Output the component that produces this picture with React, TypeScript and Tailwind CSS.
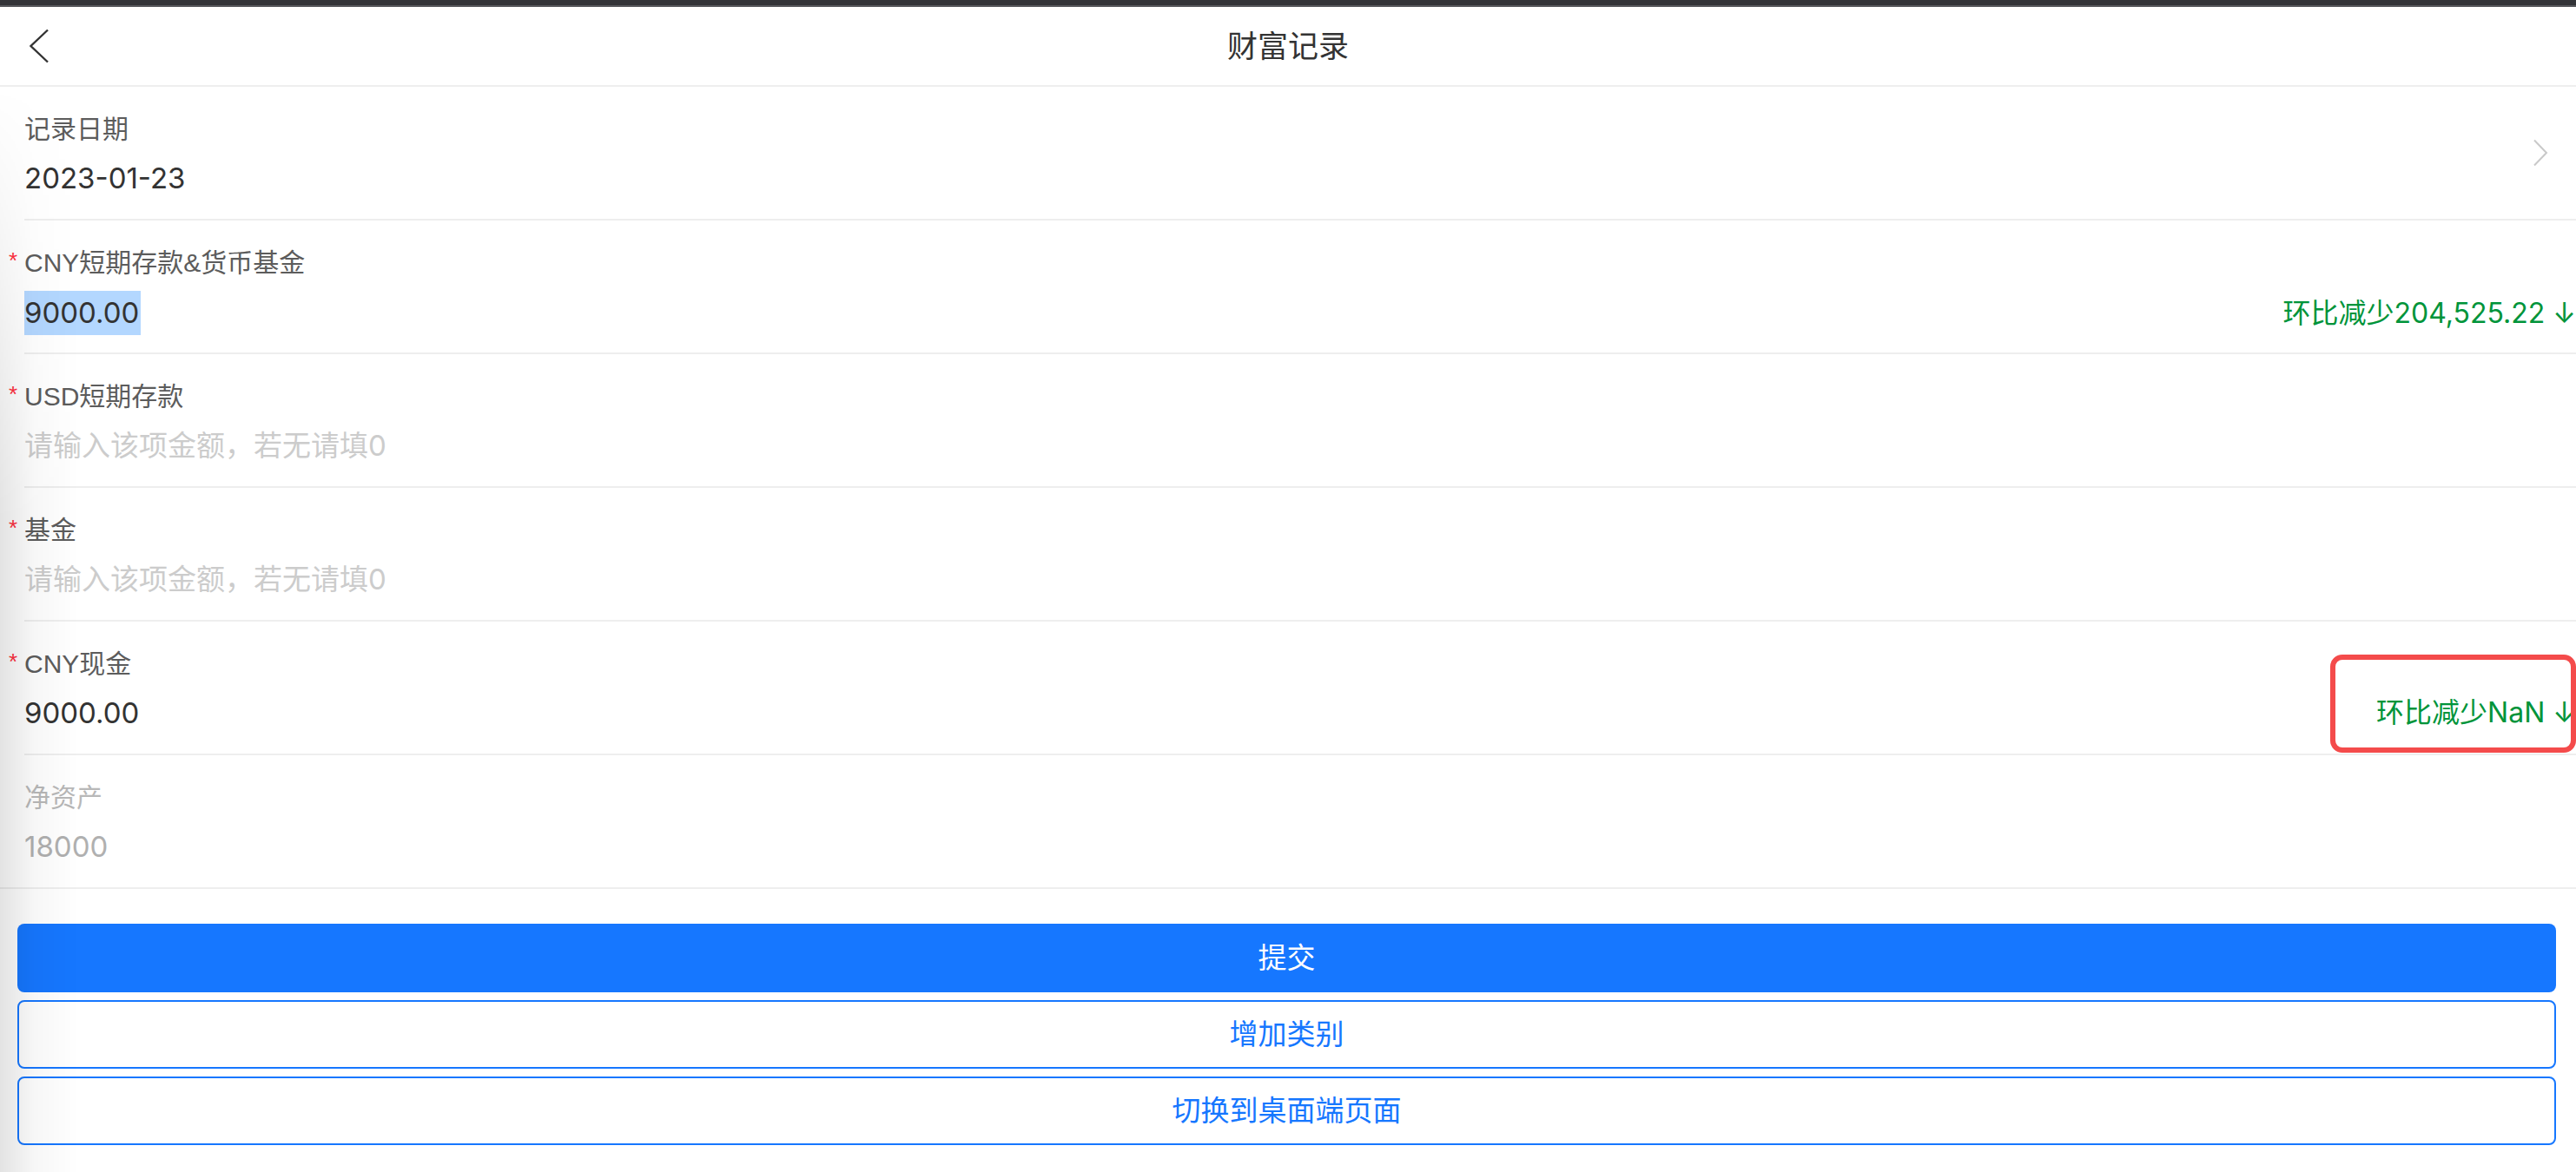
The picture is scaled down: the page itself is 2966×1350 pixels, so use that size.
import React from "react";

type FieldProps = {
  label: string;
  required?: boolean;
  last?: boolean;
  muted?: boolean;
  arrow?: boolean;
  marked?: boolean;
  extra?: string;
  children: React.ReactNode;
};

function Field({ label, required, last, muted, arrow, marked, extra, children }: FieldProps) {
  return (
    <div className="relative pl-[28px]">
      <div
        className={
          last
            ? "flex h-[152px]"
            : "flex h-[154px] border-b-2 border-[#eeeeee]"
        }
      >
        <div className="flex flex-1 flex-col pt-[28px]">
          <div
            className={
              muted
                ? "flex items-start text-[30px] leading-[42px] text-[#b8b8b8]"
                : "flex items-start text-[30px] leading-[42px] text-[#5c5c5c]"
            }
          >
            {required && (
              <span className="-ml-[18px] mt-[5px] w-[18px] text-[26px] leading-[26px] text-[#ff3141]">*</span>
            )}
            <span>{label}</span>
          </div>
          <div className="mt-[11px] flex items-center justify-between [font-family:Inter,'Noto_Sans_CJK_SC',sans-serif]">
            <div className="text-[33px] leading-[48px]">{children}</div>
            {extra && (
              <span className="whitespace-nowrap text-[32px] leading-[48px] text-[#00943a]">{extra}</span>
            )}
          </div>
        </div>
        {arrow && (
          <div className="mr-[32px] self-center">
            <svg width="18" height="32" viewBox="0 0 18 32" fill="none">
              <path d="M2 1.5 L16 16 L2 30.5" stroke="#c9c9c9" strokeWidth="2" />
            </svg>
          </div>
        )}
      </div>
      {marked && (
        <div className="pointer-events-none absolute right-0 top-[38px] h-[113px] w-[283px] rounded-[14px] border-[6px] border-[#f44b4b]" />
      )}
    </div>
  );
}

export default function App() {
  return (
    <div className="relative min-h-screen overflow-hidden bg-white text-[#333333] [font-family:'Liberation_Sans','Noto_Sans_CJK_SC',sans-serif]">
      <div className="h-[8px] border-b-2 border-[#56575b] bg-[#333438]" />
      <header className="grid h-[92px] grid-cols-[1fr_auto_1fr] items-center border-b-2 border-[#eeeeee]">
        <div className="pl-[32px]">
          <svg width="26" height="40" viewBox="0 0 26 40" fill="none">
            <path d="M23 1.5 L3.5 20 L23 38.5" stroke="#333333" strokeWidth="2.4" />
          </svg>
        </div>
        <h1 className="text-[35px] leading-none text-[#333333]">财富记录</h1>
        <div />
      </header>

      <div className="border-b-2 border-[#eeeeee]">
        <Field label="记录日期" arrow>
          <span className="text-[#333333]">2023-01-23</span>
        </Field>
        <Field label="CNY短期存款&货币基金" required extra="环比减少204,525.22 ↓">
          <span className="inline-block h-[51px] bg-[#b3d7ff] pr-[2px] leading-[51px] text-[#333333]">9000.00</span>
        </Field>
        <Field label="USD短期存款" required>
          <span className="text-[#cccccc]">请输入该项金额，若无请填0</span>
        </Field>
        <Field label="基金" required>
          <span className="text-[#cccccc]">请输入该项金额，若无请填0</span>
        </Field>
        <Field label="CNY现金" required extra="环比减少NaN ↓" marked>
          <span className="text-[#333333]">9000.00</span>
        </Field>
        <Field label="净资产" muted last>
          <span className="text-[#b0b0b0]">18000</span>
        </Field>
      </div>

      <div className="flex flex-col gap-[9px] pl-[20px] pr-[23px] pt-[40px]">
        <button className="flex h-[79px] items-center justify-center rounded-[8px] bg-[#1677ff] text-[33px] text-white">
          提交
        </button>
        <button className="flex h-[79px] items-center justify-center rounded-[8px] border-2 border-[#1677ff] bg-white text-[33px] text-[#1677ff]">
          增加类别
        </button>
        <button className="flex h-[79px] items-center justify-center rounded-[8px] border-2 border-[#1677ff] bg-white text-[33px] text-[#1677ff]">
          切换到桌面端页面
        </button>
      </div>

      <div className="pointer-events-none absolute bottom-0 left-0 top-[100px] w-[90px] bg-[linear-gradient(to_right,rgba(0,0,0,0.11),rgba(0,0,0,0.03)_45%,transparent)] [mask-image:linear-gradient(to_bottom,transparent,black_500px)]" />
    </div>
  );
}
